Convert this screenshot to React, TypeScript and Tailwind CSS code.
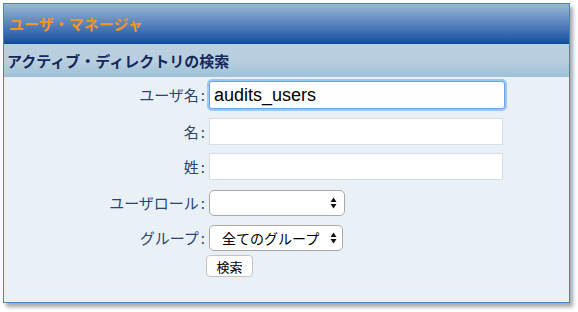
const labelCls = "w-[205px] text-right text-[15px] text-[#2b4470] pr-[4px] leading-none";

function Arrows() {
    return (
        <svg width="7" height="12" viewBox="0 0 7 12" className="shrink-0">
            <path d="M3.5 0.5 L6.5 5 L0.5 5 Z" fill="#111" />
            <path d="M3.5 11.5 L6.5 7 L0.5 7 Z" fill="#111" />
        </svg>
    );
}

function Label({ text }: { text: string }) {
    return (
        <span className={labelCls}>
            {text}
            <span className="ml-[2px]">:</span>
        </span>
    );
}

export default function App() {
    return (
        <div className="w-[578px] h-[312px] bg-white pt-[3px] pl-[3px]" style={{ fontFamily: '"Noto Sans CJK JP", "Liberation Sans", sans-serif' }}>
            <div className="w-[567px] h-[300px] border-[1.5px] border-[#4d7fc3] bg-[#e9f1f7] shadow-[3px_4px_4px_rgba(0,0,0,0.35)] flex flex-col">
                <div className="h-[40px] bg-gradient-to-b from-[#9bb8d8] to-[#1a52a2] border-b-2 border-[#124c9c] flex items-center pl-[5px]">
                    <span className="text-[#f7941d] font-bold text-[15px] leading-none">ユーザ・マネージャ</span>
                </div>
                <div className="h-[33px] bg-gradient-to-b from-[#b9cfe0] from-50% to-[#9ec1d6] flex items-center pl-[3px]">
                    <span className="text-[#142859] font-bold text-[15px] leading-none">アクティブ・ディレクトリの検索</span>
                </div>

                <div className="flex flex-col pt-[3px]">
                    <div className="flex items-center h-[29px]">
                        <Label text="ユーザ名" />
                        <div className="w-[296px] h-[28px] bg-white border border-[#6aa3ea] rounded-[3px] shadow-[0_0_0_2px_#9fc5f5] flex items-center pl-[4px]">
                            <span className="text-[18px] text-black leading-none" style={{ fontFamily: '"Liberation Sans", sans-serif' }}>audits_users</span>
                        </div>
                    </div>

                    <div className="flex items-center h-[27px] mt-[9px]">
                        <Label text="名" />
                        <div className="w-[294px] h-[27px] bg-white border border-[#d9dde1]" />
                    </div>

                    <div className="flex items-center h-[27px] mt-[8px]">
                        <Label text="姓" />
                        <div className="w-[294px] h-[27px] bg-white border border-[#d9dde1]" />
                    </div>

                    <div className="flex items-center h-[27px] mt-[9px]">
                        <Label text="ユーザロール" />
                        <div className="w-[136px] h-[26px] bg-white border border-[#a9a9a9] rounded-[5px] flex items-center justify-end pr-[7px]">
                            <Arrows />
                        </div>
                    </div>

                    <div className="flex items-center h-[27px] mt-[8px]">
                        <Label text="グループ" />
                        <div className="w-[134px] h-[26px] bg-white border border-[#a9a9a9] rounded-[5px] flex items-center justify-between pl-[12px] pr-[5px]">
                            <span className="text-[14px] text-black leading-none">全てのグループ</span>
                            <Arrows />
                        </div>
                    </div>

                    <div className="flex mt-[4px] pl-[202px]">
                        <div className="w-[47px] h-[22px] bg-white border border-[#c4c4c4] rounded-[4px] flex items-center justify-center">
                            <span className="text-[13px] text-black leading-none">検索</span>
                        </div>
                    </div>
                </div>
            </div>
        </div>
    );
}
